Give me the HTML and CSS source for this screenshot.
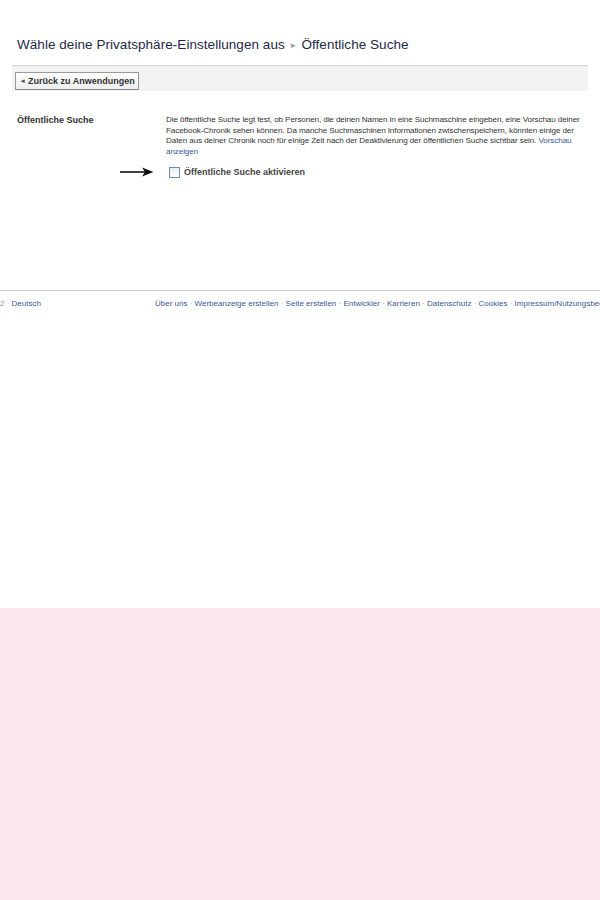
FILE: index.html
```html
<!DOCTYPE html>
<html lang="de">
<head>
  <meta charset="UTF-8"/>
  <title>Öffentliche Suche</title>
  <link rel="stylesheet" href="styles.css">
</head>
<body>
  <div class="page">
    <h1 class="title">Wähle deine Privatsphäre-Einstellungen aus <span class="crumb-sep">&#9656;</span> Öffentliche Suche</h1>
    <div class="toolbar">
      <a href="#" class="btn-back"><span class="btn-arrow">&#9666;</span> Zurück zu Anwendungen</a>
    </div>
    <div class="setting">
      <div class="setting-label">Öffentliche Suche</div>
      <div class="setting-body">
        <p class="desc">Die öffentliche Suche legt fest, ob Personen, die deinen Namen in eine Suchmaschine eingeben, eine Vorschau deiner Facebook-Chronik sehen können. Da manche Suchmaschinen Informationen zwischenspeichern, könnten einige der Daten aus deiner Chronik noch für einige Zeit nach der Deaktivierung der öffentlichen Suche sichtbar sein. <a href="#">Vorschau anzeigen</a></p>
        <div class="check-row">
          <svg class="pointer" width="34" height="10" viewBox="0 0 34 10"><path d="M0 5H26" stroke="#111" stroke-width="1.6"/><path d="M22 0.5L33.5 5L22 9.5L25 5Z" fill="#111"/></svg>
          <label class="check"><span class="box"></span>Öffentliche Suche aktivieren</label>
        </div>
      </div>
    </div>
    <div class="footer">
      <div class="footer-lang">2 · <a href="#">Deutsch</a></div>
      <div class="footer-links">
        <a href="#">Über uns</a> · <a href="#">Werbeanzeige erstellen</a> · <a href="#">Seite erstellen</a> · <a href="#">Entwickler</a> · <a href="#">Karrieren</a> · <a href="#">Datenschutz</a> · <a href="#">Cookies</a> · <a href="#">Impressum/Nutzungsbedingungen</a> · <a href="#">Hilfe</a>
      </div>
    </div>
  </div>
</body>
</html>
```
FILE: styles.css
```css
*{margin:0;padding:0;box-sizing:border-box;}
html{background:#fbe5ee;}
body{font-family:'Liberation Sans',Arial,sans-serif;color:#333;overflow:hidden;}
a{color:#3b5998;text-decoration:none;}
.page{background:#fff;height:608px;padding-top:37px;}
.title{font-size:13.5px;font-weight:normal;color:#1c2a47;margin:0 0 13px 17px;letter-spacing:0.05px;}
.crumb-sep{font-size:9px;color:#999;vertical-align:1px;margin:0 2px;}
.toolbar{margin:0 12px;background:#f2f2f2;border-top:1px solid #d5d5d5;padding:3px 3px 4px;height:26px;}
.btn-back{display:inline-flex;align-items:center;gap:3px;height:18px;padding:0 3px 0 5px;border:1px solid #999;border-bottom-color:#888;background:linear-gradient(#fff,#eee);color:#333;font-size:9px;font-weight:bold;white-space:nowrap;}
.btn-arrow{font-size:7px;color:#555;}
.setting{display:flex;padding:24px 0 0 17px;height:199px;}
.setting-label{width:149px;font-size:9px;font-weight:bold;color:#333;}
.setting-body{width:420px;}
.desc{font-size:8.1px;line-height:10.7px;letter-spacing:-0.1px;color:#333;}
.check-row{display:flex;align-items:center;margin:9px 0 0 -46px;}
.pointer{display:block;margin-right:15px;}
.check{display:flex;align-items:center;gap:4px;font-size:9px;font-weight:bold;color:#444;}
.box{width:11px;height:11px;border:1px solid #6d8aa8;background:linear-gradient(#e9eef3,#fff);}
.footer{border-top:1px solid #ccc;display:flex;padding-top:8px;font-size:8px;color:#999;white-space:nowrap;overflow:hidden;}
.footer-lang{width:155px;flex-shrink:0;}
.footer-links{color:#999;}
```
